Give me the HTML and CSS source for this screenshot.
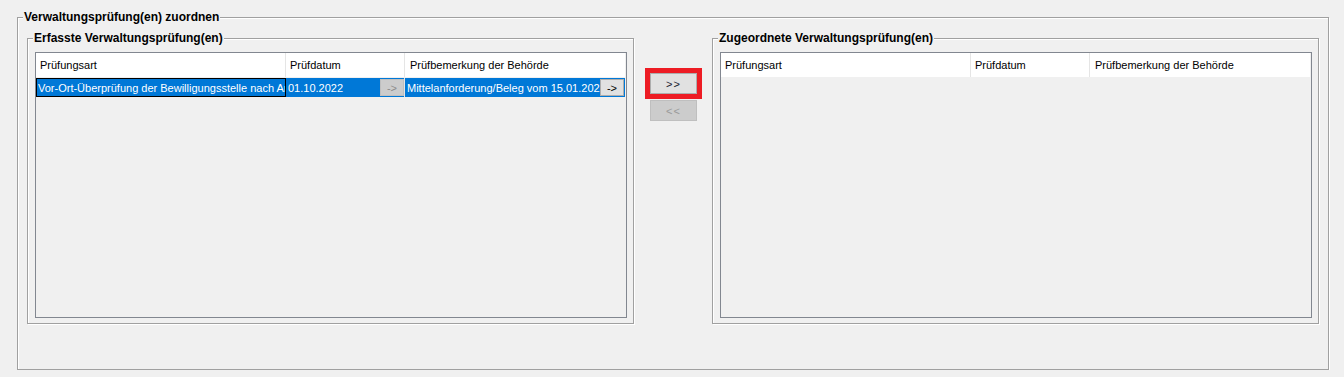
FILE: index.html
```html
<!DOCTYPE html>
<html lang="de">
<head>
    <meta charset="UTF-8">
    <title>Verwaltungsprüfung(en) zuordnen</title>
    <link rel="stylesheet" href="styles.css">
</head>
<body>
    <div class="group outer">
        <div class="group-title">Verwaltungsprüfung(en) zuordnen</div>
        <div class="group-row">
            <div class="group side">
                <div class="group-title">Erfasste Verwaltungsprüfung(en)</div>
                <div class="grid">
                    <div class="grid-head">
                        <div class="col col-art">Prüfungsart</div>
                        <div class="col col-datum">Prüfdatum</div>
                        <div class="col col-bem">Prüfbemerkung der Behörde</div>
                    </div>
                    <div class="grid-row">
                        <div class="cell col-art focused">
                            <span class="cell-text">Vor-Ort-Überprüfung der Bewilligungsstelle nach Art. 58 VO (EU)</span>
                        </div>
                        <div class="cell col-datum">
                            <span class="cell-text date">01.10.2022</span>
                            <button type="button" class="cell-btn" disabled>-&gt;</button>
                        </div>
                        <div class="cell col-bem">
                            <span class="cell-text">Mittelanforderung/Beleg vom 15.01.2022</span>
                            <button type="button" class="cell-btn">-&gt;</button>
                        </div>
                    </div>
                </div>
            </div>

            <div class="move-buttons">
                <div class="highlight">
                    <button type="button" class="move-btn">&gt;&gt;</button>
                </div>
                <button type="button" class="move-btn" disabled>&lt;&lt;</button>
            </div>

            <div class="group side">
                <div class="group-title">Zugeordnete Verwaltungsprüfung(en)</div>
                <div class="grid">
                    <div class="grid-head">
                        <div class="col col-art">Prüfungsart</div>
                        <div class="col col-datum">Prüfdatum</div>
                        <div class="col col-bem">Prüfbemerkung der Behörde</div>
                    </div>
                </div>
            </div>
        </div>
    </div>
</body>
</html>
```

FILE: styles.css
```css
body {
    margin: 0;
    background-color: #f0f0f0;
    font-family: "Liberation Sans", Arial, sans-serif;
    font-size: 11px;
    color: #000;
}

/* Windows-artige Groupbox mit geätztem Rahmen */
.group {
    box-sizing: border-box;
    border: 1px solid #a0a0a0;
    box-shadow: inset 1px 1px 0 #fff, 1px 1px 0 #fff;
}
.outer {
    width: 1312px;
    height: 353px;
    margin: 17px 0 0 17px;
}
.group-title {
    width: max-content;
    margin: -8px 0 0 5px;
    padding: 0 1px;
    background-color: #f0f0f0;
    font-size: 12px;
    font-weight: bold;
    line-height: 14px;
}
.group-row {
    display: flex;
    align-items: flex-start;
    margin-top: 14px;
    padding: 0 9px;
}
.side {
    width: 607px;
    height: 286px;
}

/* Tabelle */
.grid {
    box-sizing: border-box;
    width: 592px;
    height: 266px;
    margin: 7px 0 0 7px;
    border: 1px solid #828790;
}
.grid-head {
    display: flex;
    width: 589px;
    height: 24px;
    line-height: 24px;
    background-color: #fff;
}
.col {
    box-sizing: border-box;
    padding-left: 4px;
    overflow: hidden;
    white-space: nowrap;
}
.col-art {
    width: 250px;
    border-right: 1px solid #e5e5e5;
}
.col-datum {
    width: 119px;
    border-right: 1px solid #e5e5e5;
}
.col-bem {
    width: 220px;
    padding-left: 2px;
}
.grid-head .col-bem {
    padding-left: 5px;
}
.grid-row {
    display: flex;
    width: 589px;
    height: 19px;
    margin-top: 1px;
}
.cell {
    display: flex;
    align-items: center;
    flex-shrink: 0;
    box-sizing: border-box;
    min-width: 0;
    background-color: #0078d7;
    color: #fff;
}
.cell.focused {
    border: 1px solid #000;
    padding-left: 1px;
}
.col-datum.cell {
    padding-left: 2px;
}
.cell-text {
    flex: 1;
    min-width: 0;
    overflow: hidden;
    white-space: nowrap;
}
.cell-btn {
    flex-shrink: 0;
    box-sizing: border-box;
    width: 24px;
    height: 17px;
    padding: 0;
    border: 1px solid #adadad;
    background-color: #e1e1e1;
    font-family: inherit;
    font-size: 11px;
    color: #000;
}
.col-bem .cell-btn {
    margin-right: 1px;
}
.cell-btn:disabled {
    border-color: #bfbfbf;
    background-color: #cccccc;
    color: #8d8d8d;
}

/* Verschieben-Buttons */
.move-buttons {
    display: flex;
    flex-direction: column;
    align-items: center;
    width: 57px;
    margin: 30px 10px 0 11px;
}
.highlight {
    box-sizing: border-box;
    width: 57px;
    border: 5px solid #ed1c24;
}
.move-btn {
    display: block;
    box-sizing: border-box;
    width: 47px;
    height: 21px;
    padding: 0;
    border: 1px solid #adadad;
    background-color: #e1e1e1;
    font-family: inherit;
    font-size: 11px;
    letter-spacing: 1px;
    color: #1a1a2e;
}
.move-btn:disabled {
    margin-top: 1px;
    border-color: #bfbfbf;
    background-color: #cccccc;
    color: #9a9a9a;
}
```
